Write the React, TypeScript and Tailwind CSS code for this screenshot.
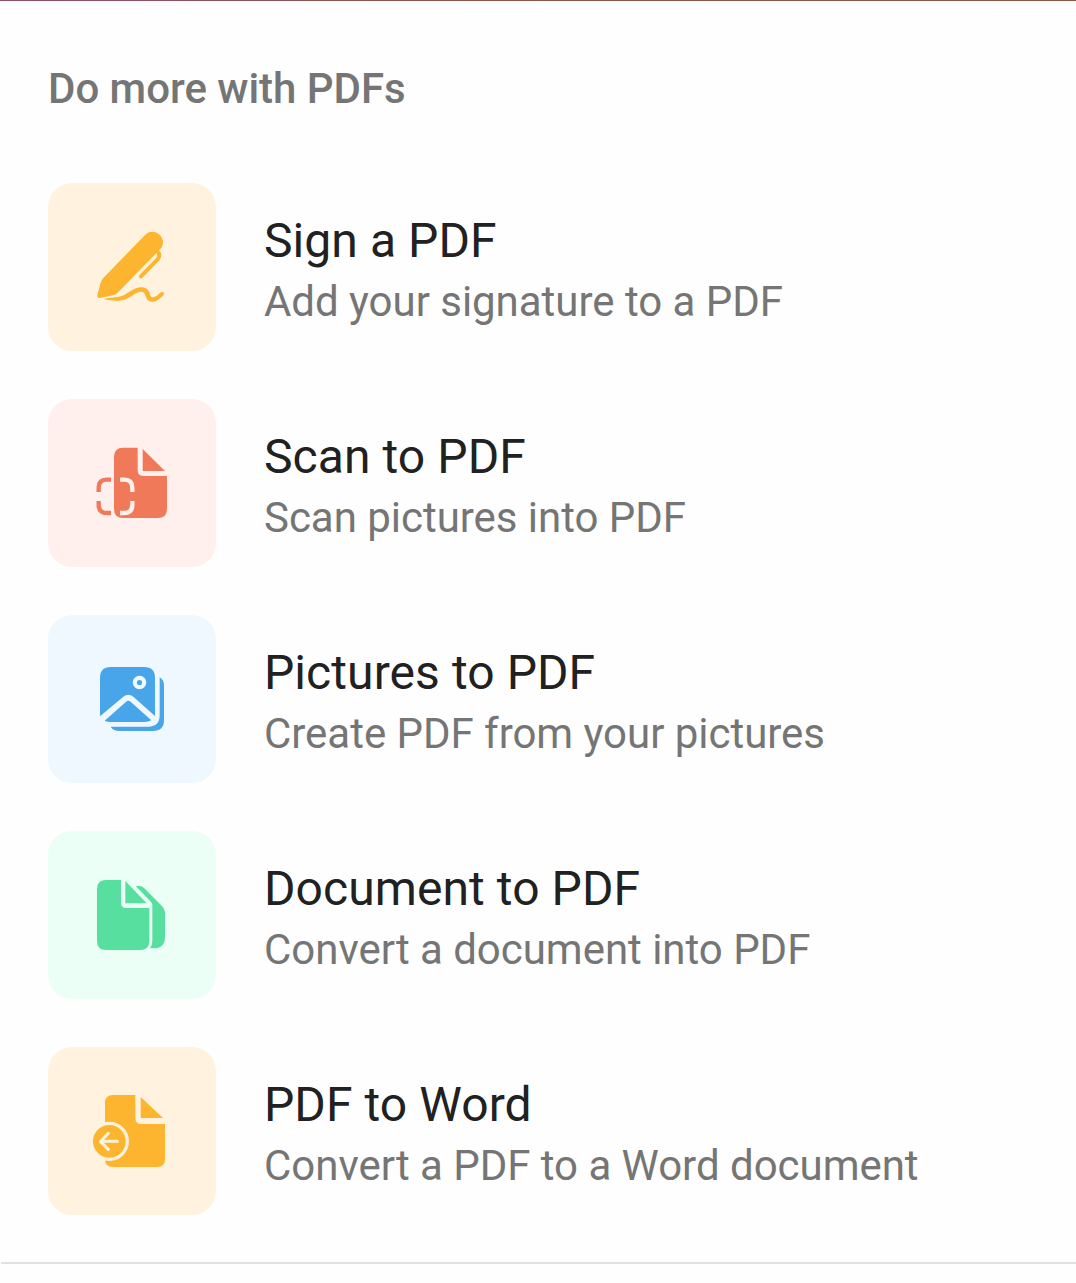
import React from 'react';

interface PdfAction {
  title: string;
  description: string;
  tileClass: string;
  icon: React.ReactNode;
}

const iconProps = {
  viewBox: '0 0 300 300',
  fill: 'none',
  className: 'w-[100px] h-[100px]',
  'aria-hidden': true,
};

const SignIcon = () => (
  <svg {...iconProps}>
    <path
      d="M190 53C201 41 220 41 233 53C246 66 246 84 235 96L107 227Q101 233 93 235L53 243Q44 244 46 235L56 197Q58 189 64 183Z"
      fill="#FDB42E"
    />
    <path d="M176 178L218 136Q227 126 220 116" stroke="#FFF3DF" strokeWidth="24" />
    <path
      d="M177 178L226 128Q235 118 230 108L225 102"
      stroke="#FDB42E"
      strokeWidth="12"
      strokeLinecap="round"
      strokeLinejoin="round"
    />
    <path
      d="M64 246C90 240 110 242 128 233C147 223 158 211 177 211C209 211 200 241 212 241C223 241 229 231 237 226C244 222 250 230 243 236C233 244 226 254 211 254C186 254 196 224 177 224C163 224 153 236 134 245C112 255 88 251 64 246Z"
      fill="#FDB42E"
    />
  </svg>
);

const ScanIcon = () => (
  <svg {...iconProps}>
    <path
      d="M124 44H167V112Q167 129 184 129H255V227Q255 255 227 255H124Q96 255 96 227V72Q96 44 124 44Z"
      fill="#F0795A"
    />
    <path d="M182 48L249 114H182Z" fill="#F0795A" />
    <path
      d="M87 140H74Q50 140 50 164V177M50 204V216Q50 240 74 240H87"
      stroke="#F0795A"
      strokeWidth="13"
    />
    <path
      d="M114 140H127Q151 140 151 164V177M151 204V216Q151 240 127 240H114"
      stroke="#FFF0ED"
      strokeWidth="13"
    />
  </svg>
);

const PicturesIcon = () => (
  <svg {...iconProps}>
    <path d="M233 85Q246 92 246 110V213Q246 246 213 246H112Q94 246 86 233H199Q233 233 233 199Z" fill="#49A5E9" />
    <path
      d="M86 54H187Q219 54 219 86V201L154 143Q139 131 124 143L54 202V86Q54 54 86 54Z"
      fill="#49A5E9"
    />
    <path d="M68 215L134 157Q139 153 144 157L208 214Q201 219 187 219H86Q75 219 68 215Z" fill="#49A5E9" />
    <circle cx="172.500" cy="100.500" r="14" stroke="#F0FBFF" strokeWidth="12.500" />
  </svg>
);

const DocumentIcon = () => (
  <svg {...iconProps}>
    <path
      d="M72 45H117V113Q117 129 133 129H202V227Q202 255 174 255H72Q45 255 45 227V72Q45 45 72 45Z"
      fill="#56DF9F"
    />
    <path d="M130 48L194 115H130Z" fill="#56DF9F" />
    <path
      d="M161 63H171Q180 63 187 70L239 122Q249 132 249 146V215Q249 250 214 250H204Q211 241 211 227V121Q211 115 207 111Z"
      fill="#56DF9F"
    />
  </svg>
);

const WordIcon = () => (
  <svg {...iconProps}>
    <path
      d="M93 42H160V111Q160 129 178 129H249V234Q249 258 225 258H93Q69 258 69 234V66Q69 42 93 42Z"
      fill="#FDB42E"
    />
    <path d="M176 48L243 111H176Z" fill="#FDB42E" />
    <circle cx="82" cy="181" r="59" fill="#FFF3DF" />
    <circle cx="82" cy="181" r="49" fill="#FDB42E" />
    <path
      d="M106 181H55M79 157L55 181L79 205"
      stroke="#FFF3DF"
      strokeWidth="9"
      strokeLinecap="round"
      strokeLinejoin="round"
    />
  </svg>
);

const actions: PdfAction[] = [
  {
    title: 'Sign a PDF',
    description: 'Add your signature to a PDF',
    tileClass: 'bg-[#FFF3DF]',
    icon: <SignIcon />,
  },
  {
    title: 'Scan to PDF',
    description: 'Scan pictures into PDF',
    tileClass: 'bg-[#FFF0ED]',
    icon: <ScanIcon />,
  },
  {
    title: 'Pictures to PDF',
    description: 'Create PDF from your pictures',
    tileClass: 'bg-[#F0F8FF]',
    icon: <PicturesIcon />,
  },
  {
    title: 'Document to PDF',
    description: 'Convert a document into PDF',
    tileClass: 'bg-[#EBFFF6]',
    icon: <DocumentIcon />,
  },
  {
    title: 'PDF to Word',
    description: 'Convert a PDF to a Word document',
    tileClass: 'bg-[#FFF3DF]',
    icon: <WordIcon />,
  },
];

const ActionRow = ({ title, description, tileClass, icon }: PdfAction) => (
  <li className="flex items-center gap-12">
    <div className={`flex size-[168px] shrink-0 items-center justify-center rounded-3xl ${tileClass}`}>
      {icon}
    </div>
    <div className="pt-[5px] whitespace-nowrap">
      <h3 className="text-[48px] leading-[63px] tracking-[0.08px] text-[#212121]">{title}</h3>
      <p className="pt-px text-[42px] leading-[57px] tracking-[-0.03px] text-[#757575]">{description}</p>
    </div>
  </li>
);

export default function App() {
  return (
    <main className="flex h-[1283px] flex-col bg-[#FEFEFE] font-['Roboto',sans-serif]">
      <div className="h-px shrink-0 bg-gradient-to-r from-[#8A5068] via-[#8B5746] to-[#8B5A40]" />
      <h2 className="mt-[60px] ml-12 text-[42px] leading-[56px] font-medium tracking-[-0.03px] text-[#757575]">
        Do more with PDFs
      </h2>
      <ul className="mt-[66px] flex flex-col gap-12 px-12">
        {actions.map((action) => (
          <ActionRow key={action.title} {...action} />
        ))}
      </ul>
      <div className="mt-[47px] ml-px h-0.5 shrink-0 bg-[#E1E1E1]" />
    </main>
  );
}
